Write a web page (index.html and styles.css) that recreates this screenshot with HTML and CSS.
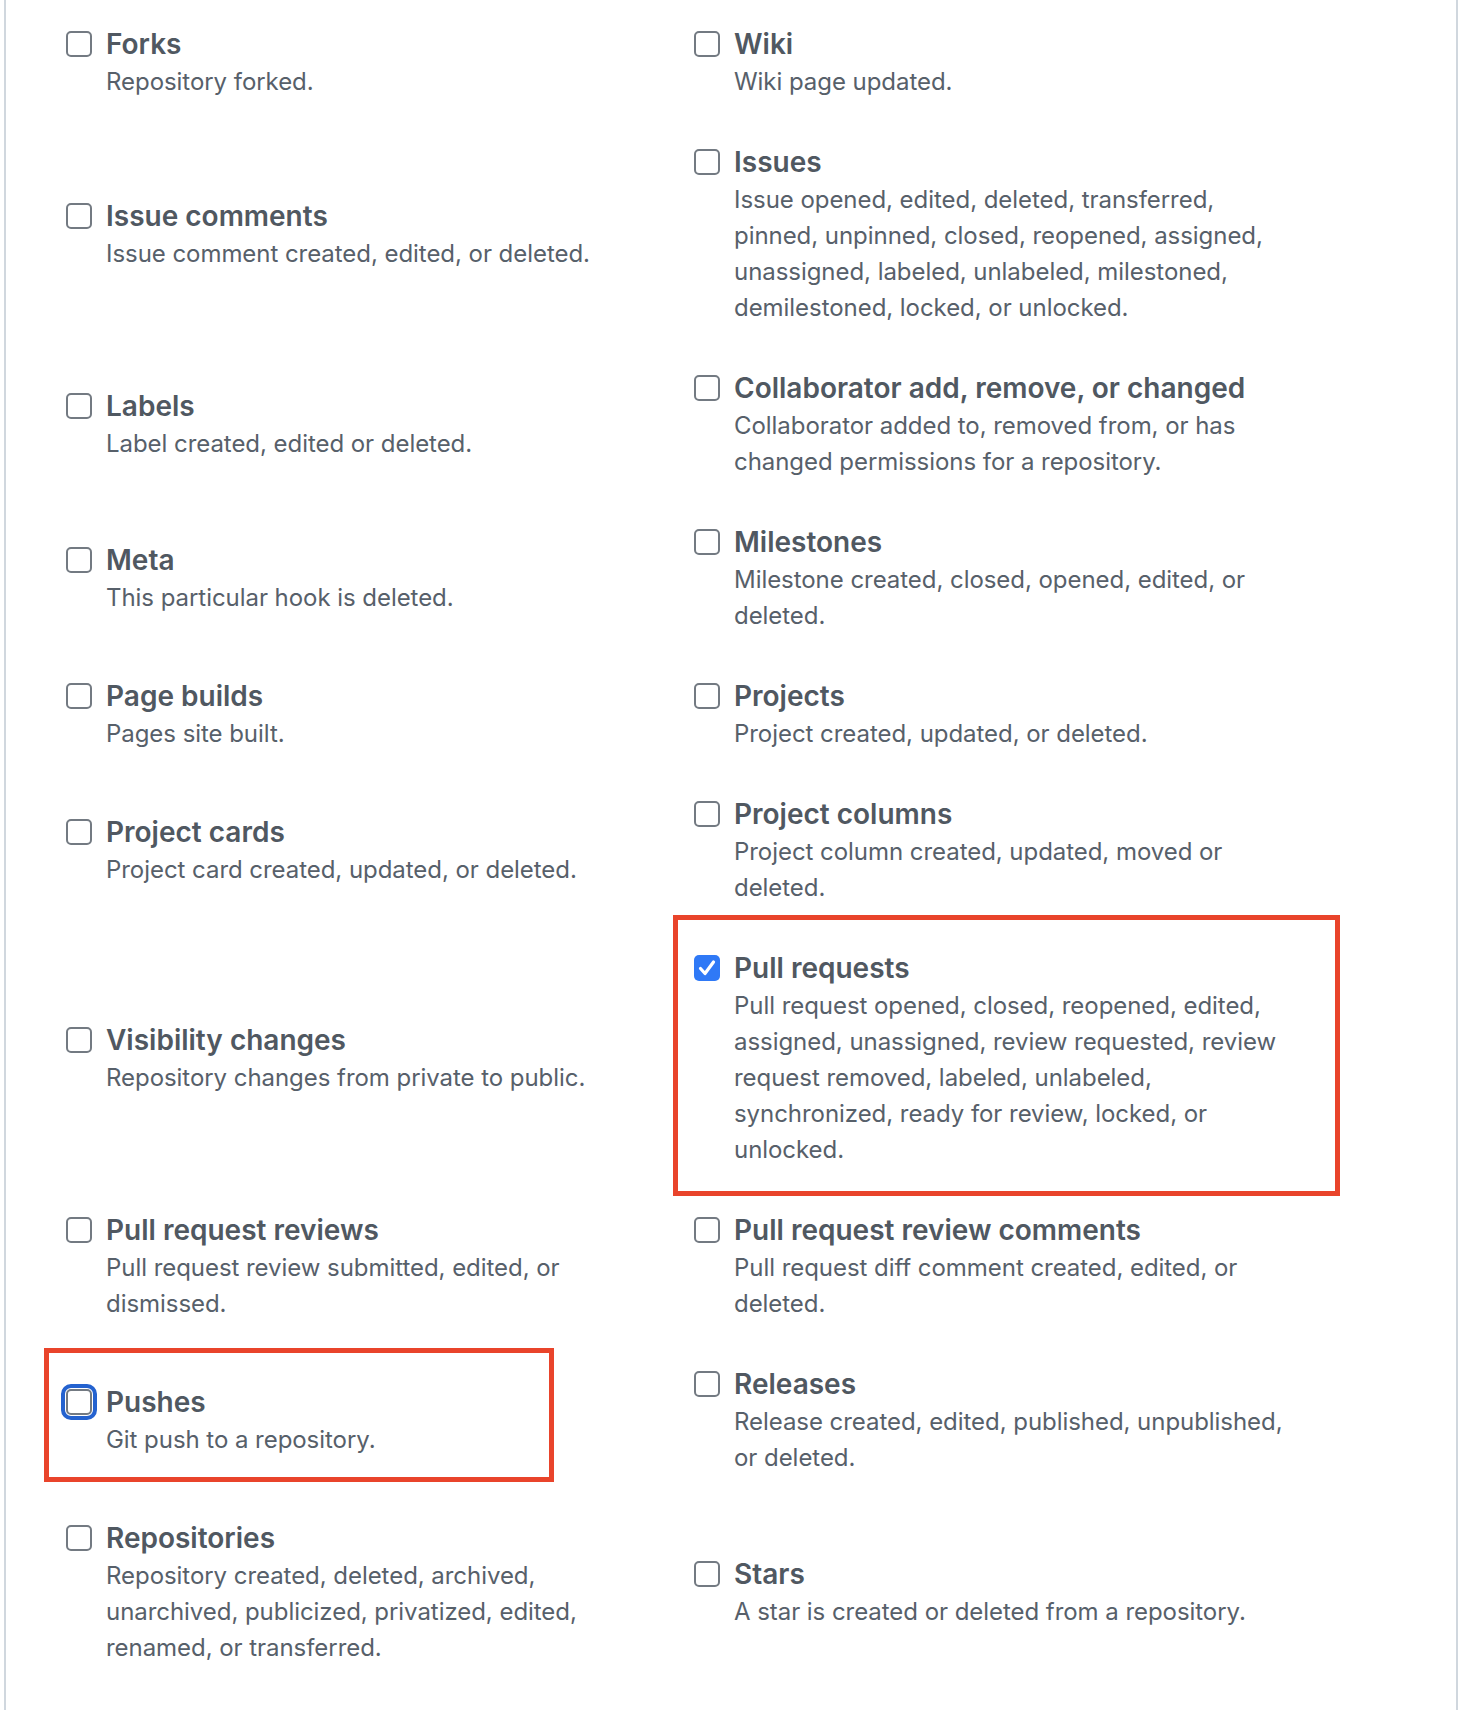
FILE: index.html
```html
<!DOCTYPE html>
<html lang="en">
<head>
<meta charset="utf-8">
<title>Webhook events</title>
<link rel="stylesheet" href="styles.css">
</head>
<body>
<div class="panel">
  <div class="events">
    <div class="item"><label class="title"><span class="cb"></span>Forks</label><p class="desc">Repository forked.</p></div>
    <div class="item"><label class="title"><span class="cb"></span>Wiki</label><p class="desc">Wiki page updated.</p></div>

    <div class="item"><label class="title"><span class="cb"></span>Issue comments</label><p class="desc">Issue comment created, edited, or deleted.</p></div>
    <div class="item"><label class="title"><span class="cb"></span>Issues</label><p class="desc">Issue opened, edited, deleted, transferred,<br>pinned, unpinned, closed, reopened, assigned,<br>unassigned, labeled, unlabeled, milestoned,<br>demilestoned, locked, or unlocked.</p></div>

    <div class="item"><label class="title"><span class="cb"></span>Labels</label><p class="desc">Label created, edited or deleted.</p></div>
    <div class="item"><label class="title"><span class="cb"></span>Collaborator add, remove, or changed</label><p class="desc">Collaborator added to, removed from, or has<br>changed permissions for a repository.</p></div>

    <div class="item"><label class="title"><span class="cb"></span>Meta</label><p class="desc">This particular hook is deleted.</p></div>
    <div class="item"><label class="title"><span class="cb"></span>Milestones</label><p class="desc">Milestone created, closed, opened, edited, or<br>deleted.</p></div>

    <div class="item"><label class="title"><span class="cb"></span>Page builds</label><p class="desc">Pages site built.</p></div>
    <div class="item"><label class="title"><span class="cb"></span>Projects</label><p class="desc">Project created, updated, or deleted.</p></div>

    <div class="item"><label class="title"><span class="cb"></span>Project cards</label><p class="desc">Project card created, updated, or deleted.</p></div>
    <div class="item"><label class="title"><span class="cb"></span>Project columns</label><p class="desc">Project column created, updated, moved or<br>deleted.</p></div>

    <div class="item"><label class="title"><span class="cb"></span>Visibility changes</label><p class="desc">Repository changes from private to public.</p></div>
    <div class="item marked marked-pr"><label class="title"><span class="cb checked"><svg viewBox="0 0 26 26" width="26" height="26"><path d="M6.5 13.5 L11 18.5 L19.5 7" fill="none" stroke="#fff" stroke-width="3.2" stroke-linecap="round" stroke-linejoin="round"/></svg></span>Pull requests</label><p class="desc">Pull request opened, closed, reopened, edited,<br>assigned, unassigned, review requested, review<br>request removed, labeled, unlabeled,<br>synchronized, ready for review, locked, or<br>unlocked.</p></div>

    <div class="item"><label class="title"><span class="cb"></span>Pull request reviews</label><p class="desc">Pull request review submitted, edited, or<br>dismissed.</p></div>
    <div class="item"><label class="title"><span class="cb"></span>Pull request review comments</label><p class="desc">Pull request diff comment created, edited, or<br>deleted.</p></div>

    <div class="item marked marked-push"><label class="title"><span class="cb focused"></span>Pushes</label><p class="desc">Git push to a repository.</p></div>
    <div class="item"><label class="title"><span class="cb"></span>Releases</label><p class="desc">Release created, edited, published, unpublished,<br>or deleted.</p></div>

    <div class="item"><label class="title"><span class="cb"></span>Repositories</label><p class="desc">Repository created, deleted, archived,<br>unarchived, publicized, privatized, edited,<br>renamed, or transferred.</p></div>
    <div class="item"><label class="title"><span class="cb"></span>Stars</label><p class="desc">A star is created or deleted from a repository.</p></div>
  </div>
</div>
</body>
</html>
```

FILE: styles.css
```css
html, body {
  margin: 0;
  padding: 0;
  background: #ffffff;
}

body {
  font-family: Inter, "Noto Sans", "Liberation Sans", sans-serif;
  color: #57606a;
}

.panel {
  margin-left: 4px;
  width: 1450px;
  min-height: 1710px;
  border-left: 2px solid #d0d7de;
  border-right: 2px solid #d0d7de;
  box-sizing: content-box;
}

.events {
  display: grid;
  grid-template-columns: 628px 628px;
  row-gap: 43px;
  align-items: center;
  padding: 25px 0 36px 60px;
}

.item {
  position: relative;
}

.title {
  display: flex;
  align-items: center;
  font-size: 28px;
  font-weight: 600;
  line-height: 38px;
  color: #505861;
  white-space: nowrap;
}

.cb {
  flex: none;
  box-sizing: border-box;
  width: 26px;
  height: 26px;
  margin-right: 14px;
  border: 2px solid #737a82;
  border-radius: 5px;
  background: #fff;
  display: flex;
  align-items: center;
  justify-content: center;
}

.cb.checked {
  border: none;
  background: #2f79f6;
}

.cb.focused {
  outline: 4px solid #2462cf;
  outline-offset: 1px;
}

.desc {
  margin: 0 0 0 40px;
  padding-top: 1px;
  font-size: 24px;
  line-height: 36px;
  letter-spacing: -0.05px;
  white-space: nowrap;
}

.marked::after {
  content: "";
  position: absolute;
  border: 5px solid #e9442b;
  pointer-events: none;
}

.marked-pr::after {
  left: -21px;
  top: -34px;
  width: 657px;
  bottom: -28px;
}

.marked-push::after {
  left: -22px;
  top: -35px;
  width: 500px;
  bottom: -24px;
}
```
